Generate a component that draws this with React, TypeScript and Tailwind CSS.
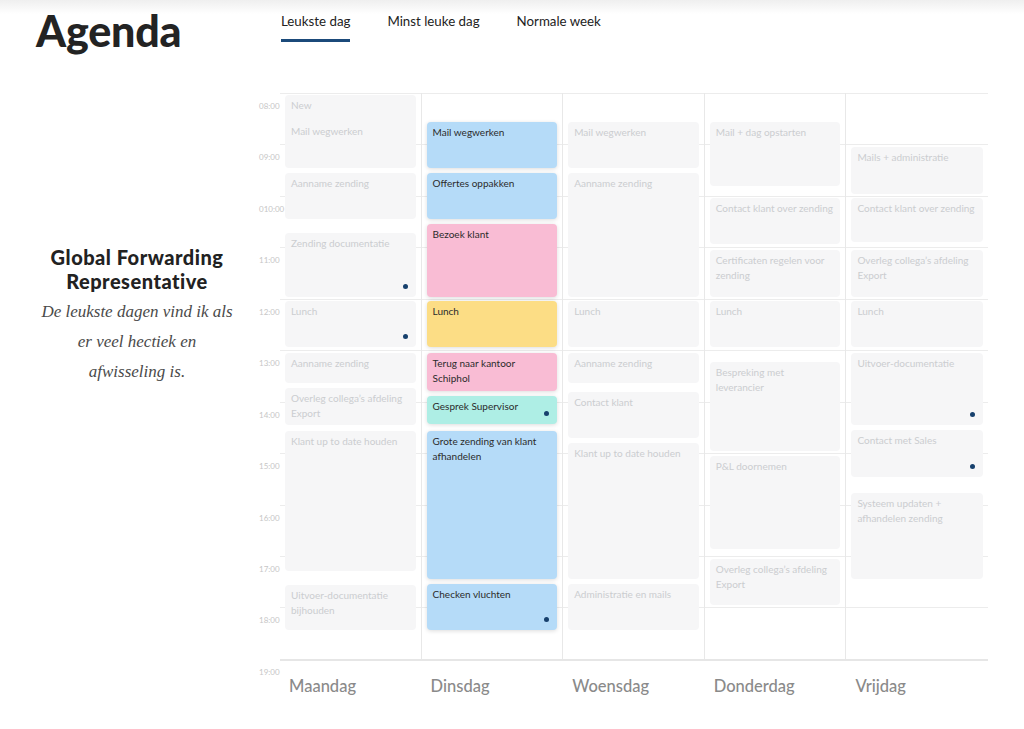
import React from "react";

type Ev = { t: number; b: number; text: string; dot?: boolean; cls?: string; extra?: string };

const TOP = 93;

const BLUE = "bg-[#b5dbf8] text-[#2b2b2b] shadow-[0_1px_4px_rgba(0,0,0,0.14)]";
const PINK = "bg-[#f9bcd4] text-[#2b2b2b] shadow-[0_1px_4px_rgba(0,0,0,0.14)]";
const YELLOW = "bg-[#fcdd85] text-[#2b2b2b] shadow-[0_1px_4px_rgba(0,0,0,0.14)]";
const TEAL = "bg-[#aeeee5] text-[#2b2b2b] shadow-[0_1px_4px_rgba(0,0,0,0.14)]";
const GREY = "bg-[#f6f6f7] text-[#cbcdd0]";

const columns: { day: string; events: Ev[] }[] = [
  {
    day: "Maandag",
    events: [
      { t: 95, b: 168, text: "New", extra: "Mail wegwerken" },
      { t: 173, b: 219, text: "Aanname zending" },
      { t: 233, b: 297, text: "Zending documentatie", dot: true },
      { t: 301, b: 347, text: "Lunch", dot: true },
      { t: 353, b: 383, text: "Aanname zending" },
      { t: 388, b: 425, text: "Overleg collega\u2019s afdeling Export" },
      { t: 431, b: 571, text: "Klant up to date houden" },
      { t: 585, b: 630, text: "Uitvoer-documentatie bijhouden" },
    ],
  },
  {
    day: "Dinsdag",
    events: [
      { t: 122, b: 168, text: "Mail wegwerken", cls: BLUE },
      { t: 173, b: 219, text: "Offertes oppakken", cls: BLUE },
      { t: 224, b: 297, text: "Bezoek klant", cls: PINK },
      { t: 301, b: 347, text: "Lunch", cls: YELLOW },
      { t: 353, b: 391, text: "Terug naar kantoor Schiphol", cls: PINK },
      { t: 396, b: 424, text: "Gesprek Supervisor", cls: TEAL, dot: true },
      { t: 431, b: 579, text: "Grote zending van klant afhandelen", cls: BLUE },
      { t: 584, b: 630, text: "Checken vluchten", cls: BLUE, dot: true },
    ],
  },
  {
    day: "Woensdag",
    events: [
      { t: 122, b: 168, text: "Mail wegwerken" },
      { t: 173, b: 297, text: "Aanname zending" },
      { t: 301, b: 347, text: "Lunch" },
      { t: 353, b: 383, text: "Aanname zending" },
      { t: 392, b: 438, text: "Contact klant" },
      { t: 443, b: 579, text: "Klant up to date houden" },
      { t: 584, b: 630, text: "Administratie en mails" },
    ],
  },
  {
    day: "Donderdag",
    events: [
      { t: 122, b: 186, text: "Mail + dag opstarten" },
      { t: 198, b: 244, text: "Contact klant over zending" },
      { t: 250, b: 297, text: "Certificaten regelen voor zending" },
      { t: 301, b: 347, text: "Lunch" },
      { t: 362, b: 451, text: "Bespreking met leverancier" },
      { t: 456, b: 549, text: "P&L doornemen" },
      { t: 559, b: 605, text: "Overleg collega\u2019s afdeling Export" },
    ],
  },
  {
    day: "Vrijdag",
    events: [
      { t: 147, b: 194, text: "Mails + administratie" },
      { t: 198, b: 242, text: "Contact klant over zending" },
      { t: 250, b: 297, text: "Overleg collega\u2019s afdeling Export" },
      { t: 301, b: 347, text: "Lunch" },
      { t: 353, b: 425, text: "Uitvoer-documentatie", dot: true },
      { t: 430, b: 477, text: "Contact met Sales", dot: true },
      { t: 493, b: 579, text: "Systeem updaten + afhandelen zending" },
    ],
  },
];

const hours = ["08:00", "09:00", "010:00", "11:00", "12:00", "13:00", "14:00", "15:00", "16:00", "17:00", "18:00", "19:00"];

function Card({ ev }: { ev: Ev }) {
  return (
    <div
      className={`absolute left-[5px] right-[5px] rounded-[4px] px-[6px] pt-[3px] text-[10px] leading-[15px] ${ev.cls ?? GREY}`}
      style={{ top: ev.t - TOP, height: ev.b - ev.t }}
    >
      <div>{ev.text}</div>
      {ev.extra && <div className="mt-[11px]">{ev.extra}</div>}
      {ev.dot && (
        <span className="absolute right-[8px] bottom-[8px] h-[5px] w-[5px] rounded-full bg-[#17406d]" />
      )}
    </div>
  );
}

export default function App() {
  return (
    <div className="w-[1024px] h-[729px] overflow-hidden bg-white font-['Lato',sans-serif] text-[#222]">
      {/* Header */}
      <header className="h-[93px] flex items-start bg-[linear-gradient(to_bottom,#efefef_0px,#ffffff_14px)]">
        <div className="w-[281px] pl-[36px] pt-[9px]">
          <h1 className="text-[43px] leading-none font-black tracking-[-0.2px] text-[#232323]">Agenda</h1>
        </div>
        <nav className="flex gap-[37px] pt-[11px] text-[13.3px] leading-[20px] text-[#222]">
          <span className="pb-[8px] border-b-[3px] border-[#1b4a7a]">Leukste dag</span>
          <span>Minst leuke dag</span>
          <span>Normale week</span>
        </nav>
      </header>

      <main className="flex">
        {/* Left intro */}
        <div className="w-[259px] pl-[15px] pt-[152px] flex flex-col items-center text-center">
          <h2 className="text-[20px] leading-[24px] font-black tracking-[0.5px] text-[#222]">
            Global Forwarding
            <br />
            Representative
          </h2>
          <p className="mt-[4px] font-['Liberation_Serif',serif] italic text-[17px] leading-[30px] text-[#4a4a4a]">
            De leukste dagen vind ik als
            <br />
            er veel hectiek en
            <br />
            afwisseling is.
          </p>
        </div>

        {/* Time labels */}
        <div className="w-[21px] flex flex-col">
          {hours.map((h) => (
            <div key={h} className="h-[51.45px] pt-[8px] text-[8px] leading-[10px] text-[#c6c6c6] whitespace-nowrap">
              {h}
            </div>
          ))}
        </div>

        {/* Calendar */}
        <div className="w-[708px] flex flex-col relative z-10">
          <div className="grid">
            <div className="col-start-1 row-start-1 flex flex-col border-b-2 border-[#e6e6e6]">
              {hours.slice(0, 11).map((h) => (
                <div key={h} className="h-[51.45px] border-t border-[#ececec]" />
              ))}
            </div>
            <div className="col-start-1 row-start-1 flex">
              {columns.map((c, i) => (
                <div
                  key={c.day}
                  className={`relative w-[141.6px] h-[566px] ${i < 4 ? "border-r border-[#e8e8e8]" : ""}`}
                >
                  {c.events.map((ev, j) => (
                    <Card key={j} ev={ev} />
                  ))}
                </div>
              ))}
            </div>
          </div>
          <div className="flex mt-[15px]">
            {columns.map((c) => (
              <div key={c.day} className="w-[141.6px] pl-[9px] text-[16.5px] leading-[20px] font-medium text-[#8a8a8a]">
                {c.day}
              </div>
            ))}
          </div>
        </div>
      </main>
    </div>
  );
}
